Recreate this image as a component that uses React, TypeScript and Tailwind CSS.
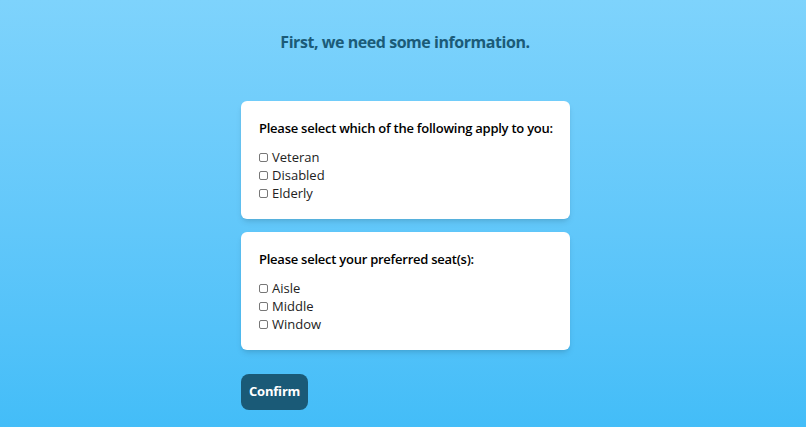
import React from "react";

const groups = [
  {
    title: "Please select which of the following apply to you:",
    options: ["Veteran", "Disabled", "Elderly"],
  },
  {
    title: "Please select your preferred seat(s):",
    options: ["Aisle", "Middle", "Window"],
  },
];

function Option({ label }: { label: string }) {
  return (
    <label className="flex items-center h-[18px] text-[13px] text-[#222]">
      <span className="w-[9px] h-[9px] border border-[#777] rounded-[2px] bg-white mr-[4px] -mt-[2px]" />
      {label}
    </label>
  );
}

export default function App() {
  return (
    <div
      className="min-h-screen h-[427px] bg-gradient-to-b from-[#7ed3fc] to-[#43bdf8] flex flex-col items-center"
      style={{ fontFamily: '"Open Sans", "Noto Sans", sans-serif' }}
    >
      <h1 className="mt-[30px] text-[16px] leading-[24px] font-bold text-[#1b5b78] pl-[4px] tracking-[-0.45px]">
        First, we need some information.
      </h1>

      <div className="mt-[47px] w-[329px] ml-[5px] flex flex-col gap-[13px]">
        {groups.map((g) => (
          <div key={g.title} className="bg-white rounded-md shadow-md px-[18px] pt-[18px] pb-[16px]">
            <h2 className="text-[13px] leading-[18px] font-semibold text-black mb-[12px] whitespace-nowrap tracking-[-0.25px]">
              {g.title}
            </h2>
            <div className="flex flex-col">
              {g.options.map((o) => (
                <Option key={o} label={o} />
              ))}
            </div>
          </div>
        ))}

        <div className="mt-[11px]">
          <button className="h-[36px] px-[8px] rounded-lg bg-[#1a5a77] text-white text-[13px] font-bold tracking-[-0.2px]">
            Confirm
          </button>
        </div>
      </div>
    </div>
  );
}
